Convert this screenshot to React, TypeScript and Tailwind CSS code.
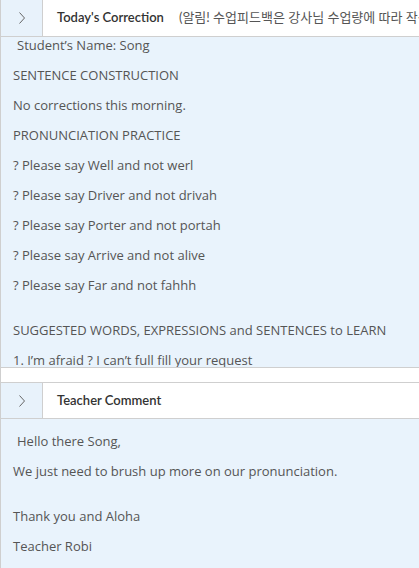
import React from "react";

const Chevron = () => (
  <svg width="10" height="14" viewBox="0 0 10 14" fill="none">
    <path d="M2.5 1.5 L7.5 7 L2.5 12.5" stroke="#666" strokeWidth="1" />
  </svg>
);

const Line = ({ children, indent = false }: { children: React.ReactNode; indent?: boolean }) => (
  <div className={`leading-[15px] h-[15px] whitespace-nowrap ${indent ? "pl-[4px]" : ""}`}>{children}</div>
);

export default function App() {
  const font = { fontFamily: 'Lato, "Noto Sans CJK KR", sans-serif' };
  const body = { fontFamily: '"Open Sans", "Noto Sans CJK KR", sans-serif' };
  return (
    <div className="w-[419px] h-[568px] overflow-hidden bg-white text-[13px] text-[#555]" style={font}>
      <div className="w-[440px] border-l border-[#cfcfcf]">
        <div className="flex h-[37px] border-b border-[#cfcfcf] bg-white">
          <div className="w-[42px] shrink-0 bg-[#e8f2fb] border-r border-[#cfcfcf] flex items-center justify-center">
            <Chevron />
          </div>
          <div className="flex items-center pl-[14px] whitespace-nowrap overflow-hidden">
            <span className="text-[#333] font-semibold text-[13px]">Today's Correction</span>
            <span className="ml-[15px] text-[#555]">(알림! 수업피드백은 강사님 수업량에 따라 작성되며 늦어질 수 있습니다.)</span>
          </div>
        </div>
        <div className="h-[331px] overflow-hidden bg-[#e9f3fc] border-b border-[#cfcfcf] pl-[12px] pt-[1px] flex flex-col gap-[15px] text-[13px]" style={body}>
          <Line indent>Student’s Name: Song</Line>
          <Line>SENTENCE CONSTRUCTION</Line>
          <Line>No corrections this morning.</Line>
          <Line>PRONUNCIATION PRACTICE</Line>
          <Line>? Please say Well and not werl</Line>
          <Line>? Please say Driver and not drivah</Line>
          <Line>? Please say Porter and not portah</Line>
          <Line>? Please say Arrive and not alive</Line>
          <Line>? Please say Far and not fahhh</Line>
          <div className="mt-[15px]">
            <Line>SUGGESTED WORDS, EXPRESSIONS and SENTENCES to LEARN</Line>
          </div>
          <Line>1. I’m afraid ? I can’t full fill your request</Line>
        </div>
        <div className="h-[14px] bg-white" />
        <div className="flex h-[37px] border-t border-b border-[#cfcfcf] bg-white">
          <div className="w-[42px] shrink-0 bg-[#e8f2fb] border-r border-[#cfcfcf] flex items-center justify-center">
            <Chevron />
          </div>
          <div className="flex items-center pl-[14px] whitespace-nowrap">
            <span className="text-[#333] font-semibold text-[13px]">Teacher Comment</span>
          </div>
        </div>
        <div className="h-[200px] bg-[#e9f3fc] pl-[12px] pt-[15px] flex flex-col gap-[15px] text-[13px]" style={body}>
          <Line indent>Hello there Song,</Line>
          <Line>We just need to brush up more on our pronunciation.</Line>
          <div className="mt-[15px]">
            <Line>Thank you and Aloha</Line>
          </div>
          <Line>Teacher Robi</Line>
        </div>
      </div>
    </div>
  );
}
